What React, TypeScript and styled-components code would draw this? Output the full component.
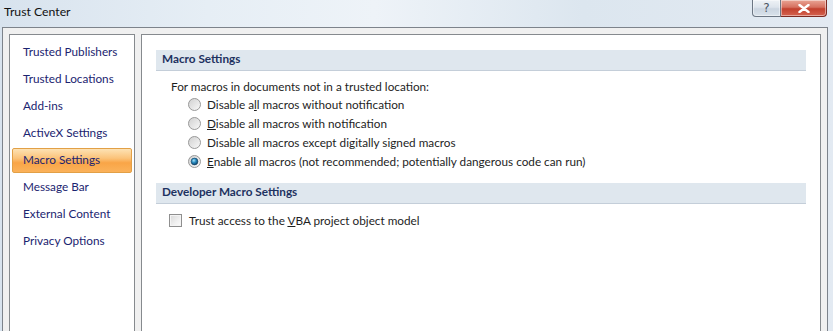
import styled, { createGlobalStyle } from 'styled-components';

const GlobalStyle = createGlobalStyle`
  html, body {
    margin: 0;
    padding: 0;
    overflow: hidden;
  }
  body {
    font-family: Lato, "Noto Sans", sans-serif;
    font-size: 11.75px;
  }
`;

const Window = styled.div`
  width: 833px;
  height: 331px;
  overflow: hidden;
  display: flex;
  flex-direction: column;
  background: linear-gradient(90deg, #d8e3ee 0%, #e6eef5 25%, #eef3f8 45%, #dce6ef 70%, #e3eaf2 100%);
`;

const TitleBar = styled.div`
  height: 27px;
  flex: none;
  display: flex;
  align-items: flex-start;
  justify-content: space-between;
  padding-right: 6px;
`;

const Title = styled.span`
  padding: 4px 0 0 4px;
  font-size: 12.25px;
  color: #111;
`;

const CaptionButtons = styled.div`
  display: flex;
  height: 17px;
`;

const CaptionButton = styled.div<{ $close?: boolean }>`
  width: ${p => (p.$close ? '46px' : '29px')};
  height: 17px;
  box-sizing: border-box;
  display: flex;
  align-items: center;
  justify-content: center;
  border: 1px solid ${p => (p.$close ? '#7c2a22' : '#6c7683')};
  border-top: none;
  border-left: ${p => (p.$close ? 'none' : undefined)};
  border-radius: ${p => (p.$close ? '0 0 4px 0' : '0 0 0 4px')};
  background: ${p =>
    p.$close
      ? 'linear-gradient(180deg, #e9a595 0%, #d6705f 45%, #c2402e 55%, #d5634f 100%)'
      : 'linear-gradient(180deg, #eef2f6 0%, #dde4ec 45%, #cbd5e0 55%, #d9e2eb 100%)'};
  box-shadow: inset 0 0 0 1px rgba(255, 255, 255, 0.45);
  font-family: "DejaVu Sans", sans-serif;
  font-size: 12px;
  color: #4b5563;
`;

const Frame = styled.div`
  flex: 1;
  margin: 0 5px 0 2px;
  border: 1px solid #7d838b;
  border-bottom: none;
  background: #f0f0f0;
  padding: 6px 6px 0;
  display: flex;
  gap: 6px;
`;

const NavPanel = styled.div`
  width: 126px;
  box-sizing: border-box;
  border: 1px solid #868a8e;
  border-bottom: none;
  background: #fff;
  padding: 5px 2px 0;
  display: flex;
  flex-direction: column;
  gap: 2px;
`;

const NavItem = styled.div<{ $active?: boolean }>`
  height: 25px;
  box-sizing: border-box;
  display: flex;
  align-items: center;
  padding: 0 0 2px 10px;
  border: 1px solid ${p => (p.$active ? '#e2a046' : 'transparent')};
  border-radius: 2px;
  color: #1b2470;
  white-space: nowrap;
  background: ${p =>
    p.$active
      ? 'linear-gradient(180deg, #fde2b4 0%, #fbc37a 40%, #f9a547 60%, #fbb25a 100%)'
      : 'transparent'};
`;

const ContentPanel = styled.div`
  flex: 1;
  box-sizing: border-box;
  border: 1px solid #868a8e;
  border-bottom: none;
  background: #fff;
  padding: 15px 14px 0;
  display: flex;
  flex-direction: column;
`;

const SectionHeader = styled.div`
  height: 21px;
  box-sizing: border-box;
  display: flex;
  align-items: center;
  padding: 0 0 3px 6px;
  background: #dfe7ee;
  border-bottom: 1px solid #c4ced9;
  color: #1e3260;
  font-weight: bold;
`;

const Section = styled.div`
  display: flex;
  flex-direction: column;
  padding: 6px 0 12px 15px;
`;

const Caption = styled.div`
  height: 18px;
  display: flex;
  align-items: center;
  color: #1e1e1e;
`;

const OptionList = styled.div`
  display: flex;
  flex-direction: column;
  padding-left: 17px;
`;

const OptionRow = styled.label`
  height: 19px;
  display: flex;
  align-items: center;
  gap: 6px;
  color: #1e1e1e;
  white-space: nowrap;
`;

const CheckRow = styled(OptionRow)`
  margin-left: -2px;
  gap: 7px;
  height: 20px;
`;

const Box = styled.span`
  width: 13px;
  height: 13px;
  box-sizing: border-box;
  border: 1px solid #8f8f8f;
  background: linear-gradient(135deg, #d8d8d8 0%, #f0f0f0 60%, #fbfbfb 100%);
  box-shadow: inset 0 0 0 1px #f4f4f4;
  flex: none;
`;

const Radio = ({ checked }: { checked?: boolean }) => (
  <svg width="13" height="13" viewBox="0 0 13 13" style={{ flex: 'none' }}>
    <defs>
      <linearGradient id="rbg" x1="0" y1="0" x2="1" y2="1">
        <stop offset="0" stopColor="#cfcfcf" />
        <stop offset="1" stopColor="#fafafa" />
      </linearGradient>
      <radialGradient id="rdot" cx="0.4" cy="0.35" r="0.7">
        <stop offset="0" stopColor="#a8e2f8" />
        <stop offset="0.45" stopColor="#2a8cc0" />
        <stop offset="1" stopColor="#0b3d63" />
      </radialGradient>
    </defs>
    <circle cx="6.5" cy="6.5" r="6" fill="url(#rbg)" stroke="#999" strokeWidth="1" />
    {checked && <circle cx="6.5" cy="6.5" r="3.4" fill="url(#rdot)" stroke="#0f3e62" strokeWidth="0.6" />}
  </svg>
);

const navItems = [
  'Trusted Publishers',
  'Trusted Locations',
  'Add-ins',
  'ActiveX Settings',
  'Macro Settings',
  'Message Bar',
  'External Content',
  'Privacy Options',
];

const App = () => {
  return (
    <>
      <GlobalStyle />
      <Window>
        <TitleBar>
          <Title>Trust Center</Title>
          <CaptionButtons>
            <CaptionButton>?</CaptionButton>
            <CaptionButton $close>
              <svg width="12" height="9" viewBox="0 0 12 9">
                <path d="M1.5 1 L10.5 8 M10.5 1 L1.5 8" stroke="#fff" strokeWidth="2.4" strokeLinecap="round" />
              </svg>
            </CaptionButton>
          </CaptionButtons>
        </TitleBar>
        <Frame>
          <NavPanel>
            {navItems.map(item => (
              <NavItem key={item} $active={item === 'Macro Settings'}>
                {item}
              </NavItem>
            ))}
          </NavPanel>
          <ContentPanel>
            <SectionHeader>Macro Settings</SectionHeader>
            <Section>
              <Caption>For macros in documents not in a trusted location:</Caption>
              <OptionList>
                <OptionRow>
                  <Radio />
                  <span>Disable a<u>l</u>l macros without notification</span>
                </OptionRow>
                <OptionRow>
                  <Radio />
                  <span><u>D</u>isable all macros with notification</span>
                </OptionRow>
                <OptionRow>
                  <Radio />
                  <span>Disable all macros except di<u>g</u>itally signed macros</span>
                </OptionRow>
                <OptionRow>
                  <Radio checked />
                  <span><u>E</u>nable all macros (not recommended; potentially dangerous code can run)</span>
                </OptionRow>
              </OptionList>
            </Section>
            <SectionHeader>Developer Macro Settings</SectionHeader>
            <Section>
              <CheckRow>
                <Box />
                <span>Trust access to the <u>V</u>BA project object model</span>
              </CheckRow>
            </Section>
          </ContentPanel>
        </Frame>
      </Window>
    </>
  );
};

export default App;
